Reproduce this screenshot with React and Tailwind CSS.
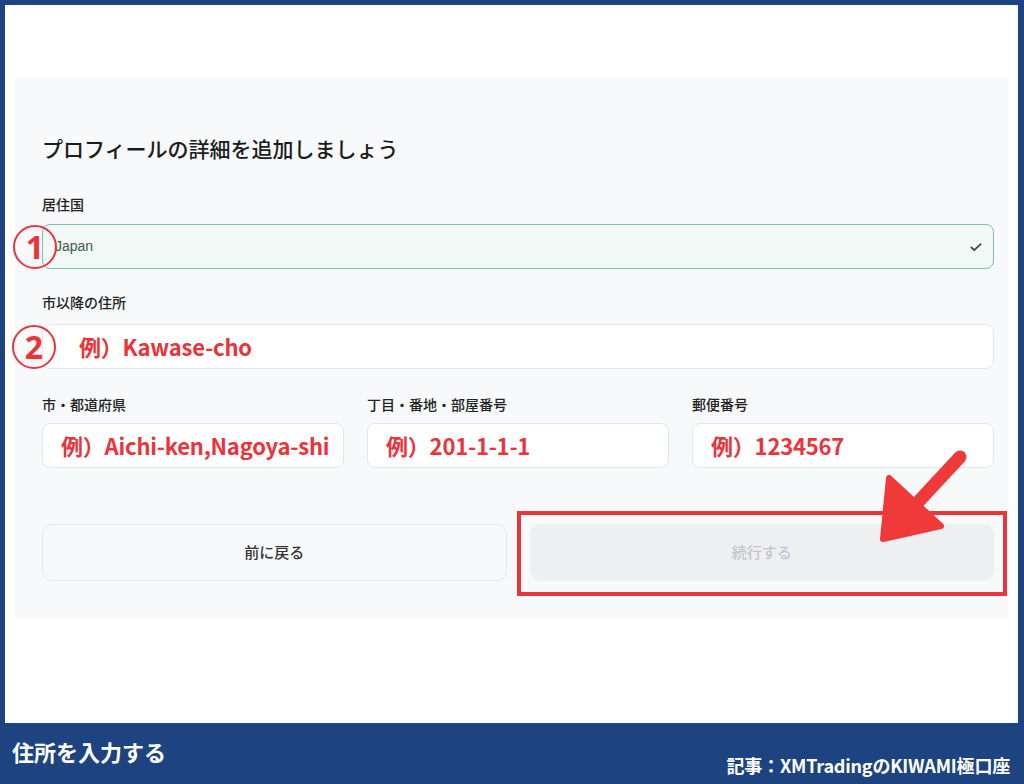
import React from "react";

const jp = { fontFamily: '"Noto Sans CJK JP", "Noto Sans", sans-serif' };
const red = "text-[#e8343a]";

function Circled({ n }) {
  return (
    <div className="absolute left-[-30px] top-1/2 -translate-y-1/2 w-[44px] h-[44px] rounded-full border-2 border-[#e8343a] flex items-center justify-center">
      <span className={`${red} text-[32px] font-bold leading-none`} style={{ fontFamily: '"Open Sans", sans-serif' }}>
        {n}
      </span>
    </div>
  );
}

function Label({ children }) {
  return <div className="text-[14px] leading-[20px] text-[#222] font-medium">{children}</div>;
}

function RedInput({ text, pad = "pl-[18px]" }) {
  return (
    <div className={`h-[45px] rounded-[8px] border border-[#e3e6ea] bg-white flex items-center ${pad}`}>
      <span className={`${red} text-[22px] font-bold tracking-[-0.2px] whitespace-nowrap`}>{text}</span>
    </div>
  );
}

export default function App() {
  return (
    <div className="w-[1024px] h-[784px] bg-[#1d4480] flex flex-col overflow-hidden" style={jp}>
      <div className="flex-1 mt-[5px] ml-[5px] mr-[6px] bg-white px-[10px] pt-[73px]">
        <div className="relative h-[540px] bg-[#f7f9fa] pl-[27px] pr-[14px] pt-[54px]">
          <h1 className="text-[21px] leading-[32px] text-[#1c1c1c] font-medium">プロフィールの詳細を追加しましょう</h1>

          <div className="mt-[30px]">
            <Label>居住国</Label>
          </div>
          <div className="relative mt-[10px] h-[45px] rounded-[8px] border border-[#7cc4a3] bg-[#f2f8f5] flex items-center justify-between pl-[12px] pr-[10px]">
            <span className="text-[14px] text-[#3d5a50]" style={{ fontFamily: '"Liberation Sans", sans-serif' }}>Japan</span>
            <svg width="14" height="14" viewBox="0 0 24 24" fill="none" stroke="#3b4a44" strokeWidth="3" strokeLinecap="round" strokeLinejoin="round">
              <path d="M4 12.5l5 5L20 7" />
            </svg>
            <Circled n="1" />
          </div>

          <div className="mt-[23px]">
            <Label>市以降の住所</Label>
          </div>
          <div className="relative mt-[12px]">
            <RedInput text="例）Kawase-cho" pad="pl-[36px]" />
            <Circled n="2" />
          </div>

          <div className="mt-[25px] grid grid-cols-3 gap-x-[23px]">
            <Label>市・都道府県</Label>
            <Label>丁目・番地・部屋番号</Label>
            <Label>郵便番号</Label>
            <div className="mt-[9px]">
              <RedInput text="例）Aichi-ken,Nagoya-shi" />
            </div>
            <div className="mt-[9px]">
              <RedInput text="例）201-1-1-1" />
            </div>
            <div className="mt-[9px]">
              <RedInput text="例）1234567" />
            </div>
          </div>

          <div className="mt-[56px] grid grid-cols-2 gap-x-[23px]">
            <button className="h-[57px] rounded-[10px] border border-[#e6e9ec] bg-[#f7f9fa] text-[15px] text-[#333] font-medium">
              前に戻る
            </button>
            <button className="h-[57px] rounded-[10px] bg-[#eeeff1] text-[15px] text-[#c3c6cb] font-medium">続行する</button>
          </div>

          {/* red annotation box */}
          <div className="absolute left-[502px] top-[433px] w-[490px] h-[85px] border-4 border-[#e8343a]" />

          {/* red arrow */}
          <svg className="absolute left-[822px] top-[362px]" width="140" height="120" viewBox="0 0 140 120">
            <line x1="123" y1="17" x2="70" y2="74" stroke="#f03a3a" strokeWidth="13" strokeLinecap="round" />
            <path d="M52 38 L46 99 L104 86 Z" fill="#f03a3a" stroke="#f03a3a" strokeWidth="6" strokeLinejoin="round" />
          </svg>
        </div>
      </div>

      <div className="h-[61px] shrink-0 flex justify-between px-[12px] text-white font-bold">
        <div className="pt-[14px] text-[22px] leading-[28px]">住所を入力する</div>
        <div className="pt-[30px] text-[18px] leading-[24px] tracking-[-0.2px] pr-[2px]">記事：XMTradingのKIWAMI極口座</div>
      </div>
    </div>
  );
}
